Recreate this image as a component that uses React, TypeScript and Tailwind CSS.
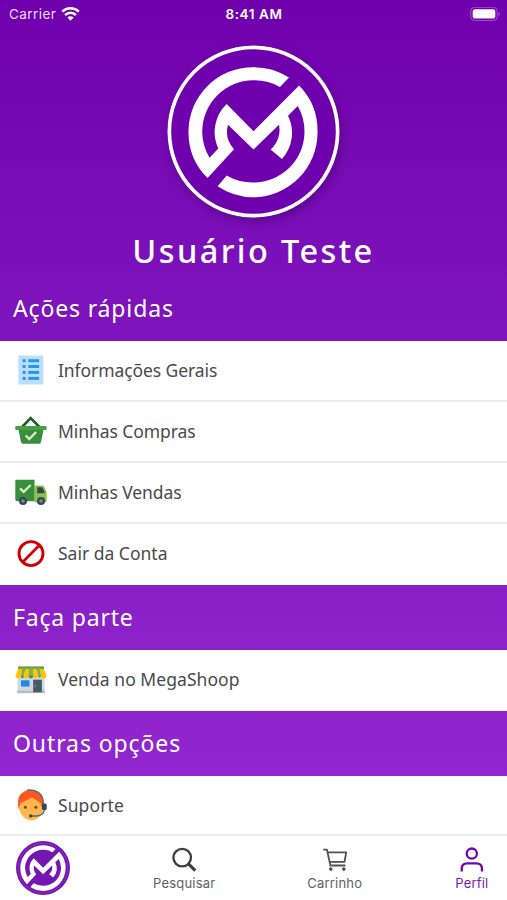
import React from 'react';

type IconProps = { className?: string };

const MARK_PATH =
  'M418 143A194 194 0 0 0 311 112A193 193 0 0 0 118 306A193 193 0 0 0 175 443L254 357A77 77 0 0 1 236 284L312 358L388 284A77 77 0 0 1 363 358L397 386A116 116 0 0 0 415 257L444 228A152 152 0 0 1 464 306A153 151 0 0 1 311 456A153 151 0 0 1 232 435L205 467A193 193 0 0 0 311 500A193 193 0 0 0 503 306A193 193 0 0 0 448 167L312 303L232 222A116 116 0 0 0 207 355L181 382A153 153 0 0 1 159 306A153 155 0 0 1 311 151A153 155 0 0 1 391 171Z';

function Logo({ className }: IconProps) {
  return (
    <svg viewBox="54 46 516 516" className={className}>
      <circle cx="312" cy="304" r="251" fill="#6f00ad" stroke="#fff" strokeWidth="11" />
      <path d={MARK_PATH} fill="#fff" />
    </svg>
  );
}

function SmallLogo({ className }: IconProps) {
  return (
    <svg viewBox="82 76 458 458" className={className}>
      <circle cx="311" cy="305" r="229" fill="#7516b3" />
      <circle cx="311" cy="305" r="211" fill="none" stroke="#8430bd" strokeWidth="8" />
      <path d={MARK_PATH} fill="#fff" />
    </svg>
  );
}

function WifiIcon() {
  return (
    <svg viewBox="0 0 19 15" className="h-[15px] w-[19px]" fill="none" stroke="#fff" strokeWidth="2.5">
      <path d="M1.2 4.6a12 12 0 0 1 16.6 0" />
      <path d="M4.1 8a7.8 7.8 0 0 1 10.8 0" />
      <path d="M6.4 10.6a4.3 4.3 0 0 1 6.2 0L9.5 13.8Z" fill="#fff" stroke="none" />
    </svg>
  );
}

function BatteryIcon() {
  return (
    <svg viewBox="0 0 31 15" className="h-[15px] w-[31px]">
      <rect x="0.8" y="0.3" width="26.4" height="13.2" rx="3.8" fill="none" stroke="#a650d0" strokeWidth="1" />
      <rect x="2.7" y="2.2" width="22.6" height="9.4" rx="2.2" fill="#fff" />
      <path d="M28.6 4.8c2 .8 2 3.4 0 4.2Z" fill="#a650d0" />
    </svg>
  );
}

function ListIcon() {
  return (
    <svg viewBox="0 0 32 32" className="size-8">
      <path d="M3.3 1.5h25v29h-25z" fill="#bbdefb" />
      <g fill="#2196f3">
        {[5.2, 11, 16.9, 22.9].map((y) => (
          <React.Fragment key={y}>
            <rect x="7.6" y={y} width="3" height="3" />
            <rect x="13.3" y={y} width="10.8" height="3" />
          </React.Fragment>
        ))}
      </g>
    </svg>
  );
}

function BasketIcon() {
  return (
    <svg viewBox="0 0 32 32" className="size-8">
      <path d="m7 12 8.7-8.8L24.4 12" fill="none" stroke="#1b5e20" strokeWidth="2.6" />
      <path d="M3 12h26l-3 15a2 2 0 0 1-2 1.7H8A2 2 0 0 1 6 27Z" fill="#388e3c" />
      <rect x="0.2" y="11" width="31.4" height="4" rx="1.2" fill="#43a047" />
      <path d="m10.7 20.5 3.5 3.5 7-7" fill="none" stroke="#dcedc8" strokeWidth="2.3" />
    </svg>
  );
}

function TruckIcon() {
  return (
    <svg viewBox="0 0 32 32" className="size-8">
      <path d="M19.5 9.5H27c1 0 1.7.4 2.2 1.3L31.7 16v8.5a1.8 1.8 0 0 1-1.8 1.8H19.5z" fill="#8bc34a" />
      <path d="M1.5 3.7h18v21.5H2a1.7 1.7 0 0 1-1.7-1.7V4.9c0-.7.5-1.2 1.2-1.2z" fill="#388e3c" />
      <path d="M22.2 11.2h4.4c.6 0 1 .3 1.2.8l1.7 4v1.3h-7.3z" fill="#37474f" />
      <path d="m5 12.4 3.7 3.5 7-6.9" fill="none" stroke="#dcedc8" strokeWidth="2.3" />
      {[8, 26].map((x) => (
        <g key={x}>
          <circle cx={x} cy="25" r="4" fill="#37474f" />
          <circle cx={x} cy="25" r="1.8" fill="#78909c" />
        </g>
      ))}
    </svg>
  );
}

function BlockedIcon() {
  return (
    <svg viewBox="0 0 32 32" className="size-8" fill="none" stroke="#d10000">
      <circle cx="16" cy="16.6" r="12" strokeWidth="2.9" />
      <path d="m7.8 25 16.6-16.8" strokeWidth="2.7" />
    </svg>
  );
}

function ShopIcon() {
  return (
    <svg viewBox="0 -0.7 32 32" className="size-8">
      <path d="M2.5 11h27v17h-27z" fill="#cfd8dc" />
      <path d="M2 27h28v2.5H2z" fill="#b0bec5" />
      <path d="M18.2 16h8.7v12.5h-8.7z" fill="#455a64" />
      <circle cx="20.2" cy="22.3" r=".8" fill="#90a4ae" />
      <path d="M6 16.6h8.5v6.2H6z" fill="#1e88e5" />
      <path d="M3 2.7h26v3.5H3z" fill="#689f38" />
      <path d="M3.3 5h4L6 12H.5ZM11 5h3.3l-.7 7H8.8ZM17.7 5H21l2.2 7h-4.8ZM24.7 5h4l2.8 7H26Z" fill="#ffc107" />
      <path d="M7.3 4H11l-2.2 8H6ZM14.3 4h3.4l.7 8h-4.8ZM21 4h3.7l1.3 8h-2.8Z" fill="#7cb342" />
      <path d="M.5 11.7h5.6a2.8 2.8 0 0 1-5.6 0ZM8.6 11.7h5.2a2.6 2.6 0 0 1-5.2 0ZM18.2 11.7h5.2a2.6 2.6 0 0 1-5.2 0ZM26 11.7h5.6a2.8 2.8 0 0 1-5.6 0Z" fill="#ffc107" />
      <path d="M6 11.7h2.8a1.4 2.8 0 0 1-2.8 0ZM13.7 11.7h4.6a2.3 2.8 0 0 1-4.6 0ZM23.3 11.7H26a1.4 2.8 0 0 1-2.7 0Z" fill="#558b2f" />
    </svg>
  );
}

function SupportIcon() {
  return (
    <svg viewBox="0 0.4 32 32" className="size-8">
      <circle cx="5.3" cy="18" r="2.6" fill="#ffa726" />
      <path d="M4.5 13.5C4.5 6 9 3.3 16 3.3S28.5 7 28.5 14v4.5c0 8-5.8 13.3-12 13.3s-12-5.3-12-12.8z" fill="#ffb74d" />
      <path d="M16 1.5C8.5 1.5 3 6.3 3 13.3v3.5l2 1.1v-3l12-6 9 5.7v3.2l2.5-1V12C28.5 5.5 23 1.5 16 1.5Z" fill="#ff5722" />
      <g fill="none" stroke="#546e7a" strokeWidth="1.4">
        <path d="M12 1.7c8.5-1.8 16 3.2 16.5 14" />
        <path d="M29.4 19c.3 6-3.4 8.4-8 8.4H16" />
      </g>
      <rect x="27" y="15" width="4.7" height="6.5" rx="1.6" fill="#37474f" />
      <circle cx="15.7" cy="27.3" r="1.7" fill="#37474f" />
      <circle cx="10.4" cy="18.6" r="1.5" fill="#784719" />
      <circle cx="20.8" cy="18.6" r="1.5" fill="#784719" />
    </svg>
  );
}

function SearchIcon() {
  return (
    <svg viewBox="0 0 26 26" className="size-[26px]" fill="none" stroke="#3d3d3d">
      <circle cx="11.2" cy="10.6" r="8.8" strokeWidth="2.3" />
      <path d="m17.4 16.9 6.9 6.8" strokeWidth="3.1" />
    </svg>
  );
}

function CartIcon() {
  return (
    <svg viewBox="0 0 26 26" className="size-[26px]" fill="none" stroke="#505050" strokeWidth="1.8">
      <path d="M1.3 2.6h3.6l3.5 15.9h15" strokeLinejoin="round" />
      <path d="M5.4 5.4h18.8l-1.7 9.4H7.4" strokeLinejoin="round" />
      <circle cx="8.8" cy="22.1" r="1.8" fill="#4a4a4a" stroke="none" />
      <circle cx="21.8" cy="22.1" r="1.8" fill="#4a4a4a" stroke="none" />
    </svg>
  );
}

function UserIcon() {
  return (
    <svg viewBox="0 0 26 26" className="size-[26px]" fill="none" stroke="#7303b0" strokeWidth="2.3">
      <circle cx="12.8" cy="6.6" r="5.1" />
      <path d="M2.7 24.5v-2.6c0-3.7 2.3-5.5 5.6-5.5h9.1c3.3 0 5.6 1.8 5.6 5.5v2.6" />
    </svg>
  );
}

type MenuItemProps = {
  icon: React.ReactNode;
  label: string;
  textClass?: string;
};

function MenuItem({ icon, label, textClass = 'tracking-[-0.08px]' }: MenuItemProps) {
  return (
    <li className="flex h-[61px] items-center gap-[11px] border-b-2 border-[#ececec] bg-white pb-px pl-[15px] last:border-white">
      {icon}
      <span className={`text-[17.5px] whitespace-nowrap text-[#4a4a4a] ${textClass}`}>{label}</span>
    </li>
  );
}

function SectionTitle({ children, className }: { children: React.ReactNode; className: string }) {
  return (
    <h2 className={`flex h-[65px] shrink-0 items-center pb-px pl-[13px] text-[23px] whitespace-nowrap ${className}`}>
      {children}
    </h2>
  );
}

export default function App() {
  return (
    <main className="flex h-[900px] w-[507px] flex-col overflow-hidden bg-linear-to-b from-[#7000ad] to-[#982bd4] font-['Noto_Sans',sans-serif] text-white">
      {/* Status bar */}
      <div className="grid h-7 shrink-0 grid-cols-3 items-center pr-[6px] pl-[9px] font-['Inter',sans-serif] text-[13.5px]">
        <div className="flex items-center gap-[5px] text-[#f0dcf8]">
          <span className="tracking-[0.45px]">Carrier</span>
          <WifiIcon />
        </div>
        <span className="pr-[2px] text-center font-semibold tracking-[0.6px]">8:41 AM</span>
        <div className="flex justify-end">
          <BatteryIcon />
        </div>
      </div>

      {/* Profile header */}
      <header className="flex h-[248px] shrink-0 flex-col items-center pt-[17px]">
        <Logo className="size-[173px] shrink-0 rounded-full shadow-[2px_4px_9px_rgba(50,0,85,0.4)]" />
        <h1 className="mt-[9px] text-[32.5px] leading-[48px] font-medium tracking-[2.4px] whitespace-nowrap">
          Usuário Teste
        </h1>
      </header>

      <SectionTitle className="tracking-[0.85px]">Ações rápidas</SectionTitle>
      <ul className="shrink-0">
        <MenuItem icon={<ListIcon />} label="Informações Gerais" />
        <MenuItem icon={<BasketIcon />} label="Minhas Compras" />
        <MenuItem icon={<TruckIcon />} label="Minhas Vendas" />
        <MenuItem icon={<BlockedIcon />} label="Sair da Conta" textClass="tracking-[0px]" />
      </ul>

      <SectionTitle className="tracking-[0.8px]">Faça parte</SectionTitle>
      <ul className="shrink-0">
        <MenuItem icon={<ShopIcon />} label="Venda no MegaShoop" textClass="tracking-[0.05px]" />
      </ul>

      <SectionTitle className="tracking-[0.9px]">Outras opções</SectionTitle>
      <ul className="h-[58px] shrink-0 bg-white">
        <MenuItem icon={<SupportIcon />} label="Suporte" textClass="tracking-[0.1px]" />
      </ul>

      {/* Tab bar */}
      <nav className="flex h-[66px] shrink-0 items-start border-t-2 border-[#ececec] bg-white pl-4 font-['Inter',sans-serif] text-[13px] text-[#606060]">
        <SmallLogo className="mt-[5px] size-[54px]" />
        <div className="mt-[11px] ml-[83px] flex flex-col items-center">
          <SearchIcon />
          <span className="leading-5 tracking-[0.2px]">Pesquisar</span>
        </div>
        <div className="mt-[11px] ml-[92px] flex flex-col items-center">
          <CartIcon />
          <span className="leading-5 tracking-[0.2px]">Carrinho</span>
        </div>
        <div className="mt-[11px] ml-[93px] flex flex-col items-center text-[#7b17b5]">
          <UserIcon />
          <span className="leading-5 tracking-[0.2px]">Perfil</span>
        </div>
      </nav>
    </main>
  );
}
